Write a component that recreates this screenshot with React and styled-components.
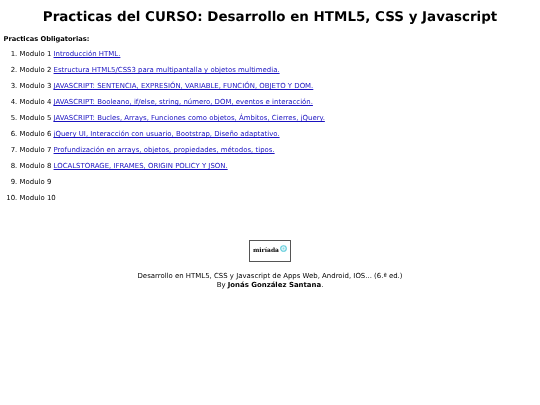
import React from "react";
import styled, { createGlobalStyle } from "styled-components";

const modules = [
  "Introducción HTML.",
  "Estructura HTML5/CSS3 para multipantalla y objetos multimedia.",
  "JAVASCRIPT: SENTENCIA, EXPRESIÓN, VARIABLE, FUNCIÓN, OBJETO Y DOM.",
  "JAVASCRIPT: Booleano, if/else, string, número, DOM, eventos e interacción.",
  "JAVASCRIPT: Bucles, Arrays, Funciones como objetos, Ámbitos, Cierres, jQuery.",
  "jQuery UI, Interacción con usuario, Bootstrap, Diseño adaptativo.",
  "Profundización en arrays, objetos, propiedades, métodos, tipos.",
  "LOCALSTORAGE, IFRAMES, ORIGIN POLICY Y JSON.",
  null,
  null,
];

const GlobalStyle = createGlobalStyle`
  html, body {
    margin: 0;
    background: #fff;
  }
  body {
    font-family: "DejaVu Sans", Verdana, sans-serif;
    font-size: 6.95px;
    color: #000;
    text-rendering: geometricPrecision;
  }
`;

const Page = styled.div`
  width: 540px;
  height: 405px;
  padding: 10px 3.5px 0;
  box-sizing: border-box;
  overflow: hidden;
  filter: blur(0.3px);
`;

const Title = styled.h1`
  margin: 0;
  font-size: 13.45px;
  line-height: 16px;
  font-weight: 700;
  text-align: center;
`;

const Subtitle = styled.p`
  margin: 8px 0 0;
  font-size: 6.7px;
  font-weight: 700;
  line-height: 10px;
`;

const List = styled.ol`
  margin: 5px 0 0;
  padding: 0 0 0 16px;
`;

const Item = styled.li`
  height: 16px;
  line-height: 10px;
`;

const ModuleLink = styled.a`
  color: #1a12c0;
  text-decoration: underline;
  text-decoration-thickness: 0.6px;
`;

const Footer = styled.footer`
  margin-top: 31px;
  display: flex;
  flex-direction: column;
  align-items: center;
  line-height: 8.5px;
  text-align: center;
`;

const Badge = styled.div`
  width: 42px;
  height: 22px;
  box-sizing: border-box;
  border: 1px solid #555;
  display: flex;
  align-items: center;
  justify-content: center;
  gap: 1px;
  margin-bottom: 10px;
`;

const BadgeName = styled.span`
  font-family: "DejaVu Serif", serif;
  font-size: 6px;
  font-weight: 700;
`;

const BadgeMark = styled.svg`
  width: 7px;
  height: 7px;
  margin-top: -6px;
`;

export default function App() {
  return (
    <Page>
      <GlobalStyle />
      <Title>Practicas del CURSO: Desarrollo en HTML5, CSS y Javascript</Title>
      <Subtitle>Practicas Obligatorias:</Subtitle>
      <List>
        {modules.map((label, i) => (
          <Item key={i}>
            Modulo {i + 1} {label && <ModuleLink href="#">{label}</ModuleLink>}
          </Item>
        ))}
      </List>
      <Footer>
        <Badge>
          <BadgeName>miríada</BadgeName>
          <BadgeMark viewBox="0 0 10 10">
            <circle cx="5" cy="5" r="4" fill="#e4f7fa" stroke="#62cddb" strokeWidth="1.6" />
            <circle cx="5" cy="5" r="1.3" fill="#8adbe6" />
          </BadgeMark>
        </Badge>
        <div>Desarrollo en HTML5, CSS y Javascript de Apps Web, Android, IOS... (6.ª ed.)</div>
        <div>
          By <b>Jonás González Santana</b>.
        </div>
      </Footer>
    </Page>
  );
}
